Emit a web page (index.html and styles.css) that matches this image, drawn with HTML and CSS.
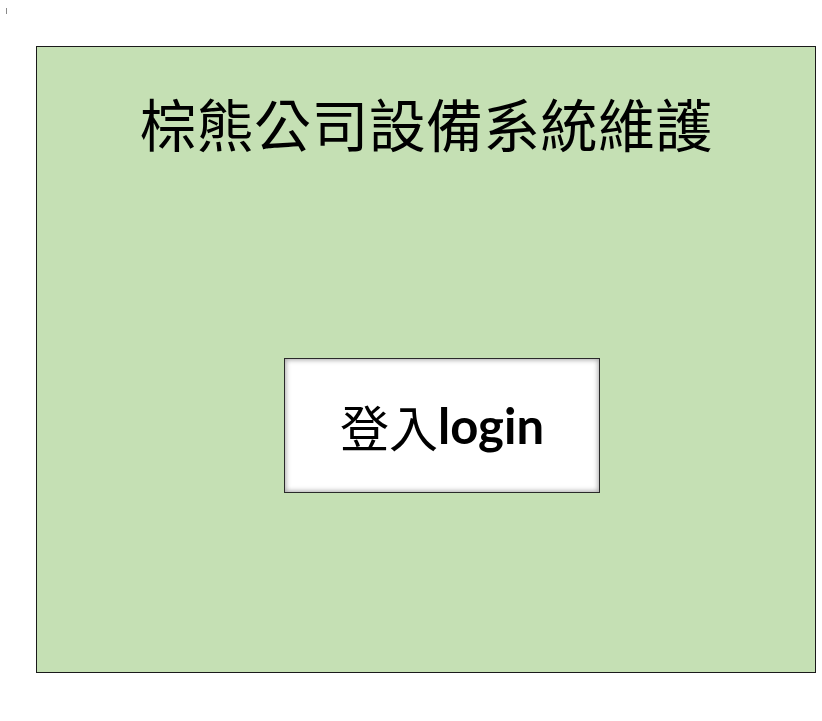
FILE: index.html
```html
<!DOCTYPE html>
<html lang="zh-Hant">
<head>
<meta charset="utf-8">
<title>棕熊公司設備系統維護</title>
<link rel="stylesheet" href="styles.css">
</head>
<body>
<div class="tick"></div>
<main class="panel">
  <h1 class="title">棕熊公司設備系統維護</h1>
  <button class="login"><span class="zh">登入</span><span class="en">login</span></button>
</main>
</body>
</html>
```
FILE: styles.css
```css
html, body {
  margin: 0;
  padding: 0;
  background: #ffffff;
}
body {
  padding-top: 8px;
}
.tick {
  width: 1px;
  height: 6px;
  margin-left: 6px;
  background: #8a8a8a;
}
.panel {
  box-sizing: border-box;
  width: 780px;
  height: 627px;
  margin: 32px 0 0 36px;
  border: 1px solid #1a1a1a;
  background: #c5e0b4;
  display: flex;
  flex-direction: column;
  align-items: center;
}
.title {
  margin: 47px 0 0 0;
  font-family: "Noto Sans CJK TC", "Noto Sans CJK SC", sans-serif;
  font-weight: 400;
  font-size: 57px;
  line-height: 57px;
  color: #000;
  letter-spacing: 0.3px;
}
.login {
  align-self: flex-start;
  margin: 207px 0 0 247px;
  box-sizing: border-box;
  width: 316px;
  height: 135px;
  border: 1px solid #2a2a2a;
  background: #ffffff;
  box-shadow: inset 0 0 5px 1px rgba(0,0,0,0.35);
  display: flex;
  align-items: center;
  justify-content: center;
  padding: 0;
  color: #000;
  cursor: pointer;
}
.zh {
  font-family: "Noto Sans CJK TC", sans-serif;
  font-size: 49px;
  font-weight: 400;
  line-height: 1;
}
.en {
  font-family: Lato, "Open Sans", sans-serif;
  font-size: 49px;
  font-weight: 700;
  line-height: 1;
}
```
